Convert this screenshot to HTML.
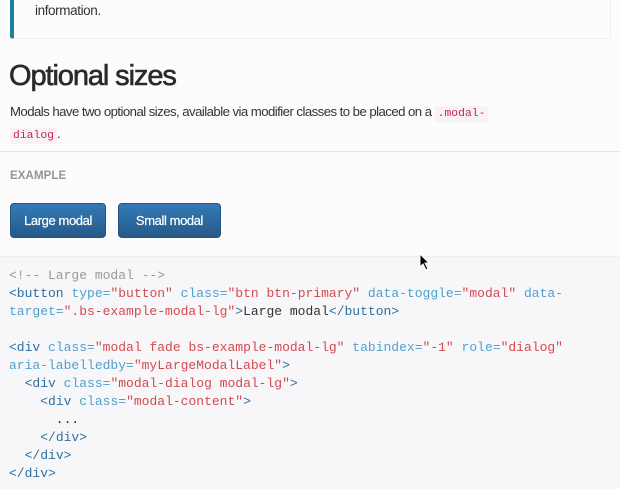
<!DOCTYPE html>
<html><head><style>
body{margin:0;width:620px;height:489px;background:#fcfcfd;font-family:"Liberation Sans",sans-serif;color:#333;overflow:hidden;position:relative}
.callout{position:absolute;left:10px;top:-10px;width:596px;height:47px;border:1px solid #eee;border-left:4px solid #1b809e;border-radius:3px;background:#fcfcfd}
.callout span{position:absolute;left:21px;top:12px;font-size:13.5px;letter-spacing:-0.4px}
h1{position:absolute;left:9px;top:60px;margin:0;font-size:29px;line-height:32px;font-weight:normal;color:#2a2a2a;letter-spacing:-1.1px;-webkit-text-stroke:0.6px #2a2a2a}
p{position:absolute;left:10px;top:102px;width:600px;margin:0;font-size:13.2px;letter-spacing:-0.55px;line-height:20px}
code{font-family:"Liberation Mono",monospace;font-size:11.4px;letter-spacing:0;color:#c7254e;background:#f9f2f4;padding:2px 3px}
.hr{position:absolute;left:0;top:151px;width:620px;height:1px;background:#e5e5e5}
.ex{position:absolute;left:10px;top:170px;font-size:11.5px;font-weight:bold;color:#959595;letter-spacing:0.1px}
.btn{position:absolute;top:203px;height:33px;border:1px solid #245580;border-radius:4px;background:linear-gradient(#337ab7,#265a88);color:#fff;font-size:13px;letter-spacing:-0.4px;line-height:33px;text-align:center;-webkit-text-stroke:0.2px #fff}
pre{position:absolute;left:0;top:256px;width:620px;height:233px;margin:0;background:#f7f7f9;border-top:1px solid #eee;padding:10px 9px 0;box-sizing:border-box;font-family:"Liberation Mono",monospace;font-size:13px;line-height:18px;color:#333}
.c{color:#999}.t{color:#2f6f9f}.a{color:#4f9fcf}.s{color:#d44950}
</style></head><body>
<div class="callout"><span>information.</span></div>
<h1>Optional sizes</h1>
<p>Modals have two optional sizes, available via modifier classes to be placed on a <code>.modal-</code><br><code>dialog</code>.</p>
<div class="hr"></div>
<div class="ex">EXAMPLE</div>
<div class="btn" style="left:10px;width:94px">Large modal</div>
<div class="btn" style="left:118px;width:101px">Small modal</div>
<pre><span class="c">&lt;!-- Large modal --&gt;</span>
<span class="t">&lt;button</span> <span class="a">type=</span><span class="s">"button"</span> <span class="a">class=</span><span class="s">"btn btn-primary"</span> <span class="a">data-toggle=</span><span class="s">"modal"</span> <span class="a">data-</span>
<span class="a">target=</span><span class="s">".bs-example-modal-lg"</span><span class="t">&gt;</span>Large modal<span class="t">&lt;/button&gt;</span>

<span class="t">&lt;div</span> <span class="a">class=</span><span class="s">"modal fade bs-example-modal-lg"</span> <span class="a">tabindex=</span><span class="s">"-1"</span> <span class="a">role=</span><span class="s">"dialog"</span>
<span class="a">aria-labelledby=</span><span class="s">"myLargeModalLabel"</span><span class="t">&gt;</span>
  <span class="t">&lt;div</span> <span class="a">class=</span><span class="s">"modal-dialog modal-lg"</span><span class="t">&gt;</span>
    <span class="t">&lt;div</span> <span class="a">class=</span><span class="s">"modal-content"</span><span class="t">&gt;</span>
      ...
    <span class="t">&lt;/div&gt;</span>
  <span class="t">&lt;/div&gt;</span>
<span class="t">&lt;/div&gt;</span></pre>
<svg style="position:absolute;left:419px;top:253px" width="12" height="18"><path d="M1 1 L1 14 L4 11 L7 17 L9 16 L6 10 L10 10 Z" fill="#000" stroke="#fff" stroke-width="1"/></svg>
</body></html>
